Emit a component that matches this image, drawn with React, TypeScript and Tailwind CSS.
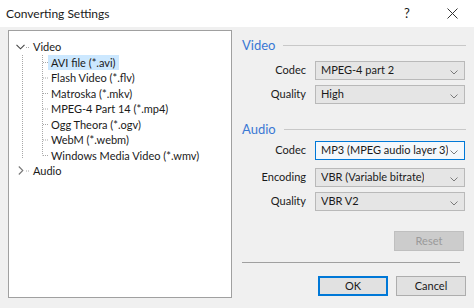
import { ReactNode } from "react";

const Chevron = ({ dir = "down" }: { dir?: "down" | "right" }) =>
  dir === "down" ? (
    <svg width="9" height="6" viewBox="0 0 9 6" className="shrink-0">
      <polyline points="0.5,0.8 4.5,4.8 8.5,0.8" fill="none" stroke="#444" strokeWidth="1.1" />
    </svg>
  ) : (
    <svg width="6" height="9" viewBox="0 0 6 9" className="shrink-0">
      <polyline points="0.8,0.5 4.8,4.5 0.8,8.5" fill="none" stroke="#777" strokeWidth="1.1" />
    </svg>
  );

const ComboArrow = () => (
  <svg width="8" height="5" viewBox="0 0 8 5" className="absolute right-[6px] top-[8px]">
    <polyline points="0.5,0.5 4,4 7.5,0.5" fill="none" stroke="#7a7a7a" strokeWidth="1" />
  </svg>
);

const formats = [
  "AVI file (*.avi)",
  "Flash Video (*.flv)",
  "Matroska (*.mkv)",
  "MPEG-4 Part 14 (*.mp4)",
  "Ogg Theora (*.ogv)",
  "WebM (*.webm)",
  "Windows Media Video (*.wmv)",
];

const GroupHeader = ({ title, className }: { title: string; className?: string }) => (
  <div className={`flex items-center h-[18px] pl-[3px] ${className ?? ""}`}>
    <span className="text-[13px] text-[#3a78d4] leading-none">{title}</span>
    <div className="flex-1 h-px bg-[#c8c8c8] ml-[8px] mr-[2px]" />
  </div>
);

const Field = ({
  label,
  value,
  focused,
  className,
}: {
  label: string;
  value: string;
  focused?: boolean;
  className?: string;
}) => (
  <div className={`flex items-center h-[19px] ${className ?? ""}`}>
    <span className="w-[67px] text-right text-[11px]">{label}</span>
    <div
      className={`relative ml-[9px] w-[150px] h-[19px] border flex items-center pl-[5px] pr-[16px] ${
        focused ? "border-[#0078d7] bg-[#f4f8fc]" : "border-[#b9b9b9] bg-[#e5e5e5]"
      }`}
    >
      <span className="text-[11px] whitespace-nowrap overflow-hidden">{value}</span>
      <ComboArrow />
    </div>
  </div>
);

const Button = ({ children, className }: { children: ReactNode; className?: string }) => (
  <div className={`w-[70px] h-[20px] flex items-center justify-center text-[11px] ${className ?? ""}`}>
    {children}
  </div>
);

export default function App() {
  return (
    <div
      className="w-[474px] h-[308px] bg-[#f0f0f0] text-[#1a1a1a] relative overflow-hidden"
      style={{ fontFamily: "Lato, 'Liberation Sans', sans-serif" }}
    >
      {/* title bar */}
      <div className="h-[27px] bg-white flex items-center pl-[6px]">
        <span className="text-[12px] flex-1">Converting Settings</span>
        <span className="text-[13px] w-[14px] text-center mr-[33px]">?</span>
        <svg width="11" height="11" viewBox="0 0 11 11" className="mr-[16px]">
          <path d="M0.5 0.5 L10.5 10.5 M10.5 0.5 L0.5 10.5" stroke="#333" strokeWidth="1" />
        </svg>
      </div>

      <div className="flex pl-[8px] pt-[3px]">
        {/* tree */}
        <div className="relative w-[224px] h-[268px] border border-[#a0a0a0] bg-white pt-[8px]">
          <svg className="absolute left-0 top-0" width="222" height="200">
            <g stroke="#a8a8a8" strokeWidth="1" strokeDasharray="1 1" fill="none">
              <line x1="13.5" y1="24" x2="13.5" y2="127" />
              <line x1="33.5" y1="24" x2="33.5" y2="124.5" />
              {formats.map((_, i) => (
                <line key={i} x1="34" y1={31.5 + i * 15.5} x2="40" y2={31.5 + i * 15.5} />
              ))}
              <line x1="17" y1="16.5" x2="20" y2="16.5" />
              <line x1="17" y1="140" x2="20" y2="140" />
            </g>
          </svg>
          <div className="h-[15.5px] flex items-center pl-[7px]">
            <Chevron />
            <span className="text-[11px] ml-[8px]">Video</span>
          </div>
          {formats.map((f, i) => (
            <div key={f} className="h-[15.5px] flex items-center pl-[39px]">
              <span
                className={`text-[11px] px-[3px] leading-[15px] whitespace-nowrap ${
                  i === 0 ? "bg-[#cce8ff]" : ""
                }`}
              >
                {f}
              </span>
            </div>
          ))}
          <div className="h-[15.5px] flex items-center pl-[9px]">
            <Chevron dir="right" />
            <span className="text-[11px] ml-[9px]">Audio</span>
          </div>
        </div>

        {/* settings */}
        <div className="ml-[7px] w-[229px] flex flex-col">
          <GroupHeader title="Video" className="mt-[6px]" />
          <Field label="Codec" value="MPEG-4 part 2" className="mt-[7px]" />
          <Field label="Quality" value="High" className="mt-[5px]" />

          <GroupHeader title="Audio" className="mt-[16px]" />
          <Field label="Codec" value="MP3 (MPEG audio layer 3) (MPEG-1)" focused className="mt-[3px]" />
          <Field label="Encoding" value="VBR (Variable bitrate)" className="mt-[8px]" />
          <Field label="Quality" value="VBR V2" className="mt-[5px]" />

          <div className="flex justify-end mt-[20px] pr-[4px]">
            <Button className="bg-[#cccccc] border border-[#bfbfbf] text-[#9a9a9a]">Reset</Button>
          </div>

          <div className="h-px bg-[#a0a0a0] mt-[11px] ml-[3px] mr-[8px]" />

          <div className="flex justify-end gap-[8px] mt-[13px] pr-[2px]">
            <Button className="bg-[#e1e1e1] border-2 border-[#0078d7]">OK</Button>
            <Button className="bg-[#e1e1e1] border border-[#adadad]">Cancel</Button>
          </div>
        </div>
      </div>
    </div>
  );
}
